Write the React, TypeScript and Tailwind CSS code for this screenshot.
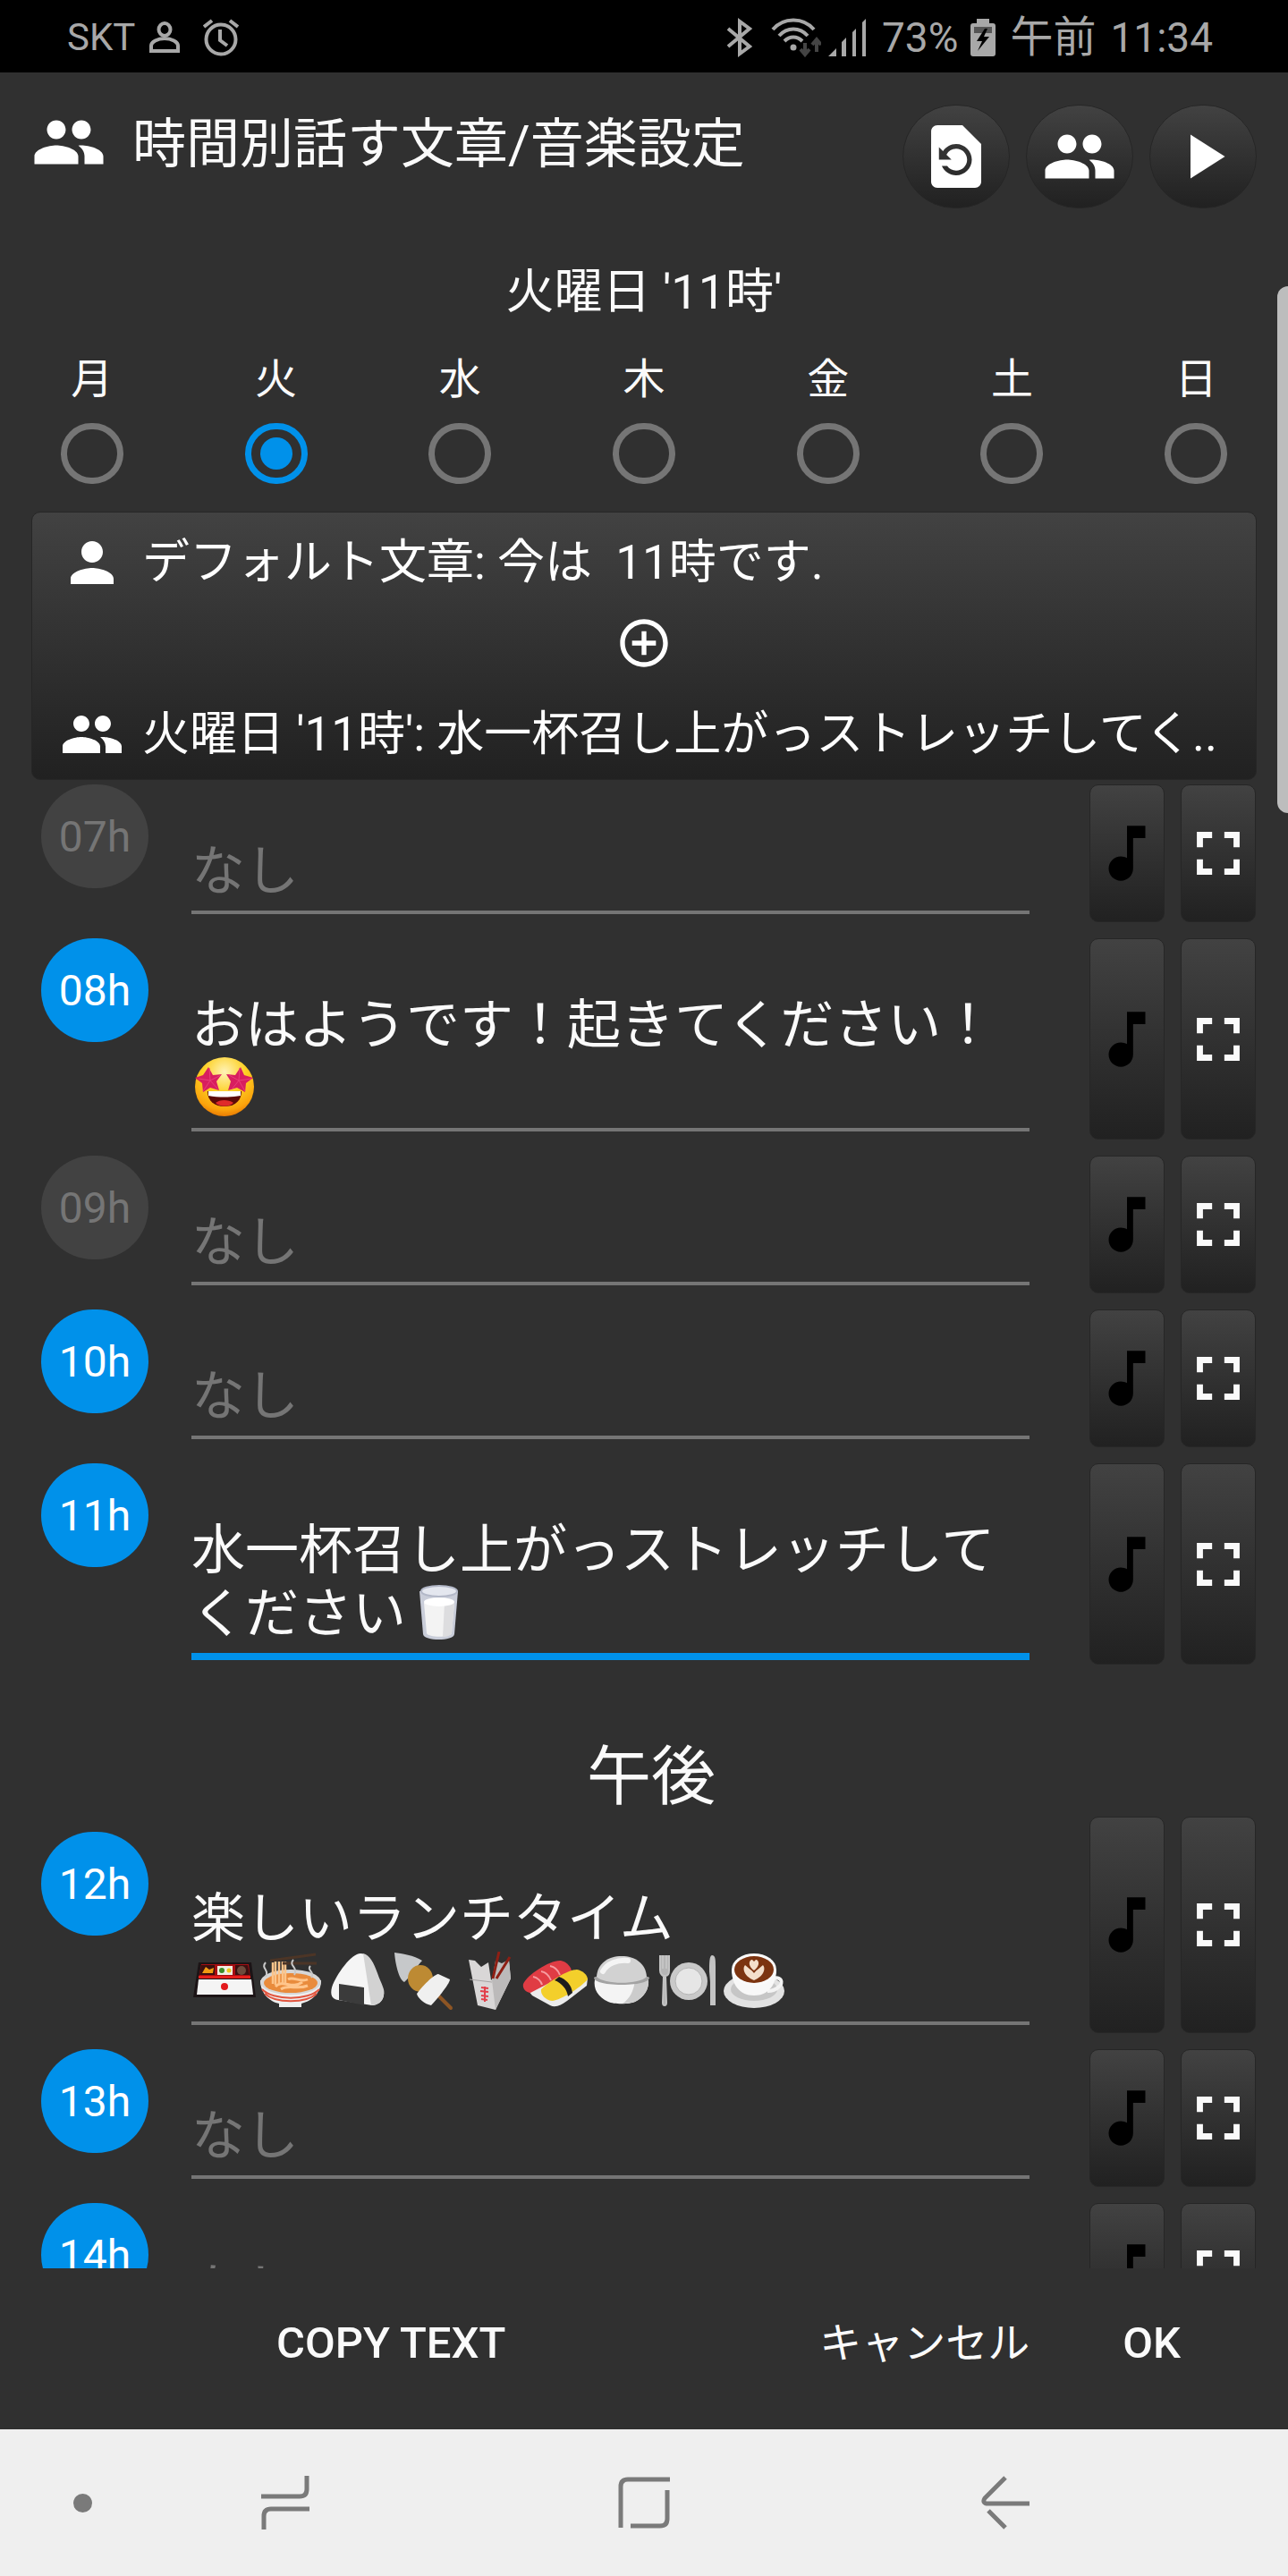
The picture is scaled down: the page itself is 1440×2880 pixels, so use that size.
import { useState } from "react";
import type { ReactNode } from "react";
import {
  MdAddCircleOutline,
  MdFullscreen,
  MdMusicNote,
  MdPeople,
  MdPerson,
  MdPlayArrow,
  MdRestorePage,
} from "react-icons/md";

const DAYS = ["月", "火", "水", "木", "金", "土", "日"];

const Emoji = ({ children }: { children: ReactNode }) => (
  <svg viewBox="0 0 74 72" className="h-[72px] w-[74px]" aria-hidden="true">
    {children}
  </svg>
);

const StarStruck = () => (
  <Emoji>
    <defs>
      <radialGradient id="face" cx="0.5" cy="0.25" r="0.8">
        <stop offset="0" stopColor="#fff3b8" />
        <stop offset="0.45" stopColor="#fdd023" />
        <stop offset="0.8" stopColor="#fba30c" />
        <stop offset="1" stopColor="#e06a00" />
      </radialGradient>
    </defs>
    <circle cx="37" cy="36" r="33" fill="url(#face)" />
    <path d="M19 14l5 9 10-1-6 8 3 10-10-3-8 5-1-10-8-6 9-3z" fill="#d81e5f" />
    <path d="M55 14l4 9 10 3-8 6-1 10-9-5-10 3 3-10-5-8 10 1z" fill="#d81e5f" />
    <path d="M20 15l1 14 12-6M21 29l8 9M21 29l-8 12M21 29L8 27" stroke="#e83f78" fill="none" />
    <path d="M54 15l-1 14-11-6M53 29l-8 10M53 29l7 12M53 29l14-2" stroke="#e83f78" fill="none" />
    <path d="M18 41h38c0 11-8 17-19 17S18 52 18 41z" fill="#5c0a08" />
    <path d="M19 41h36v5c-11 2-25 2-36 0z" fill="#fff" />
    <path d="M27 54c5-4 14-4 20 0-5 5-15 5-20 0z" fill="#e02a2a" />
  </Emoji>
);

const Milk = () => (
  <Emoji>
    <path d="M15 13l4 48c1 8 34 8 35 0l4-48z" fill="#c9cdd9" />
    <path d="M20 26l3 34c2 5 26 5 28 0l3-34z" fill="#f3f3f3" />
    <path d="M43 26h11l-3 34c-2 3-6 4-10 4z" fill="#dddddf" />
    <ellipse cx="37" cy="25" rx="17" ry="5" fill="#fff" />
    <ellipse cx="37" cy="13" rx="20" ry="6" fill="#e4e7ef" stroke="#b3b8c8" strokeWidth="2" />
  </Emoji>
);

const Bento = () => (
  <Emoji>
    <path d="M8 16h59l5 39H2z" fill="#1c1416" />
    <path d="M11 18h53l2 16H8z" fill="#a80e12" />
    <path d="M11 19h15v11H9zM49 19h14l2 11H49z" fill="#3a1010" />
    <path d="M29 20h17v10H29z" fill="#f1efe4" />
    <path d="M12 28l4-7 4 3 5-2-1 6z" fill="#f19a12" />
    <circle cx="34" cy="25" r="3" fill="#3c8c28" />
    <circle cx="42" cy="25" r="2.500" fill="#f0c81c" />
    <circle cx="56" cy="25" r="5" fill="#6d4b3c" />
    <path d="M8 31h58v3H8z" fill="#e6201c" />
    <path d="M8 35h59l2 17H6z" fill="#f4f4f4" />
    <circle cx="37" cy="43" r="4" fill="#e3191c" />
  </Emoji>
);

const Ramen = () => (
  <Emoji>
    <path d="M3 36c0 15 11 24 21 26v4h25v-4c12-3 22-12 22-26z" fill="#efefef" />
    <ellipse cx="37" cy="38" rx="34" ry="14" fill="#d6d6d6" />
    <ellipse cx="37" cy="39" rx="30" ry="11" fill="#e98b3c" />
    <path d="M17 16v24M20 15v26M24 15v26M28 15v26M31 15v24" stroke="#fcc48a" strokeWidth="2.500" />
    <path d="M20 43c8-9 18 4 30-5M26 46c9-6 18 1 30-4M34 35c6-4 13 4 22 0" stroke="#ffc58c" strokeWidth="3" fill="none" />
    <path d="M5 46c12 13 52 13 64 0M8 51c12 11 46 11 58 0" stroke="#e2553f" strokeWidth="2" fill="none" />
    <path d="M14 14l51-7M28 17h38" stroke="#4c3526" strokeWidth="3" />
    <path d="M9 16c-6 7 5 8 0 16M40 13c-6 7 6 8 1 17M59 20c-5 5 6 6 1 13" stroke="#c9c9c9" strokeWidth="2" fill="none" />
  </Emoji>
);

const Onigiri = () => (
  <Emoji>
    <path d="M41 6c7 0 13 7 18 22 4 12 9 18 8 25-1 7-7 11-13 11L16 58c-7-1-9-6-7-14C14 29 31 6 41 6z" fill="#f5f5f5" />
    <path d="M44 6c8 2 12 11 16 22 4 12 9 18 7 25-2 8-9 11-14 11z" fill="#d2d2d2" />
    <path d="M17 40l28 4v20l-28-6z" fill="#3b3b3b" />
  </Emoji>
);

const Oden = () => (
  <Emoji>
    <path d="M50 49l18 18" stroke="#8d5524" strokeWidth="4" strokeLinecap="round" />
    <path d="M5 5c8 1 22 3 31 9-6 6-13 18-20 24C10 35 6 18 5 5z" fill="#c6c8ca" />
    <ellipse cx="34" cy="34" rx="14" ry="15" fill="#bd8a33" />
    <path d="M54 29l13 6c0 5-17 25-21 29-7-1-15-8-16-13 6-8 18-21 24-22z" fill="#f0f0f0" />
  </Emoji>
);

const Takeout = () => (
  <Emoji>
    <path d="M14 13l7 1 7 7 8-5 3 20 20-22 2 20-17 35-20-5z" fill="#d9d7d7" />
    <path d="M40 36l4-22 7 3 8-4 2 21-17 35z" fill="#bcbaba" />
    <path d="M41 34l7-30M45 34l15-24" stroke="#8e1f14" strokeWidth="3" />
    <path d="M15 35l25 3" stroke="#a7a4a4" />
    <path d="M28 44l8 1M27 48l9 1M32 43v17M28 53l8 1M28 57l7 1" stroke="#e2404a" strokeWidth="2" />
  </Emoji>
);

const Sushi = () => (
  <Emoji>
    <path d="M2 42l9 11 20 11c6 3 12 0 19-5l22-17 1-8-25-9z" fill="#ececec" />
    <path d="M1 40c4-10 30-27 42-26 7 1 12 8 12 12L9 50c-6-1-9-5-8-10z" fill="#e03c44" />
    <path d="M12 32c5 1 9 5 10 9M21 26c6 1 9 5 11 10M31 20c6 1 9 5 11 10" stroke="#f69ba0" strokeWidth="2" fill="none" />
    <path d="M21 46c8-8 30-22 40-22 6 1 12 6 12 11-8 9-29 23-40 24-7-1-13-7-12-13z" fill="#f3cf2b" />
    <path d="M36 36l5-4c8 3 14 9 15 18l-5 4c-1-8-7-15-15-18z" fill="#1c1c1c" />
  </Emoji>
);

const Rice = () => (
  <Emoji>
    <path d="M7 35h60c1 11-5 20-15 25-6 3-24 3-30 0C11 55 5 46 7 35z" fill="#f4f4f4" />
    <path d="M52 35h15c1 11-5 20-15 25-4 1-9 2-14 2 8-5 13-15 14-27z" fill="#cccccc" />
    <path d="M6 33c2-4 60-4 62 0 0 4-10 8-31 8S6 37 6 33z" fill="#a3a3a3" />
    <path d="M9 32C10 17 22 9 37 9s27 8 28 23c-8 9-48 9-56 0z" fill="#d2d2d2" />
    <path d="M16 26c5-9 16-13 28-12" stroke="#f4f4f4" strokeWidth="6" strokeLinecap="round" fill="none" />
  </Emoji>
);

const Plate = () => (
  <Emoji>
    <path d="M6 8v17c0 4 3 6 4 6l-1 30c0 4 4 4 4 0l-1-30c2 0 4-2 4-6V8M9 8v15M13 8v15" stroke="#c4c4c4" strokeWidth="2" fill="#b5b5b5" />
    <circle cx="38" cy="37" r="21" fill="#c9c9c9" />
    <circle cx="38" cy="37" r="15" fill="#e6e6e6" stroke="#b5b5b5" />
    <path d="M64 8c4 0 4 5 4 12v44h-6V38l-1-12c0-8 0-18 3-18z" fill="#c4c4c4" />
  </Emoji>
);

const Coffee = () => (
  <Emoji>
    <ellipse cx="37" cy="48" rx="34" ry="19" fill="#e2e2e2" />
    <ellipse cx="37" cy="46" rx="26" ry="13" fill="#c6c6c6" />
    <path d="M57 34c11-3 13 5 8 9-3 3-8 5-13 5" stroke="#f3f3f3" strokeWidth="4" fill="none" />
    <path d="M12 24c0 16 8 29 25 29s25-13 25-29z" fill="#f8f8f8" />
    <ellipse cx="37" cy="24" rx="25" ry="18" fill="#fafafa" />
    <ellipse cx="37" cy="24" rx="22" ry="15" fill="#7c3410" />
    <path d="M37 36C25 31 24 22 27 19c3 3 7 5 10 9 3-4 7-6 10-9 3 3 2 12-10 17zM37 25c-8-6-5-12-2-12l2 2 2-2c3 0 6 6-2 12z" fill="#f3dfcb" />
  </Emoji>
);

type Hour = {
  hour: string;
  on: boolean;
  text: string;
  tall?: boolean;
  focused?: boolean;
  emoji?: ReactNode;
  emojiClass?: string;
};

const MORNING: Hour[] = [
  { hour: "07h", on: false, text: "" },
  {
    hour: "08h",
    on: true,
    text: "おはようです！起きてください！",
    tall: true,
    emoji: <StarStruck />,
    emojiClass: "left-0",
  },
  { hour: "09h", on: false, text: "" },
  { hour: "10h", on: true, text: "" },
  {
    hour: "11h",
    on: true,
    text: "水一杯召し上がっストレッチしてください",
    tall: true,
    focused: true,
    emoji: <Milk />,
    emojiClass: "left-60",
  },
];

const LUNCH: Hour = {
  hour: "12h",
  on: true,
  text: "楽しいランチタイム",
  tall: true,
  emoji: (
    <>
      <Bento />
      <Ramen />
      <Onigiri />
      <Oden />
      <Takeout />
      <Sushi />
      <Rice />
      <Plate />
      <Coffee />
    </>
  ),
  emojiClass: "left-0",
};

const AFTERNOON: Hour[] = [
  { hour: "13h", on: true, text: "" },
  { hour: "14h", on: true, text: "" },
];

const StatusBar = () => (
  <div className="flex h-[81px] shrink-0 items-center bg-black pl-[75px] pr-[84px] pt-[2px] text-[46px] leading-none text-[#a8a8a8]">
    <span className="text-[42px]">SKT</span>
    <svg viewBox="0 0 34 36" className="ml-4 h-9 w-[34px]" fill="none" stroke="currentColor" strokeWidth="4">
      <ellipse cx="17" cy="9" rx="6.500" ry="7" />
      <path d="M2 33v-6c0-4 7-8 15-8s15 4 15 8v6z" />
    </svg>
    <svg viewBox="0 0 40 42" className="ml-[26px] h-[42px] w-10" fill="none" stroke="currentColor" strokeWidth="4">
      <circle cx="20" cy="23" r="16.500" />
      <path d="M19 12v12l8 6M1 9l9-7M39 9l-9-7" />
    </svg>
    <svg viewBox="0 0 30 44" className="ml-auto h-11 w-[30px]" fill="none" stroke="currentColor" strokeWidth="4">
      <path d="M2 12l24 20-11 8V4l11 8L2 32" />
    </svg>
    <svg viewBox="0 0 56 44" className="ml-5 h-11 w-14" fill="none" stroke="currentColor" strokeWidth="4">
      <path d="M2 13c12-14 34-14 46 0M9 20c9-10 23-10 32 0M15 26c6-6 14-6 20 0" />
      <circle cx="25" cy="33" r="3.500" fill="currentColor" stroke="none" />
      <path d="M38 28v12M33 35l5 6 5-6M51 38V26M46 30l5-6 5 6" stroke="#444" />
    </svg>
    <svg viewBox="0 0 44 42" className="ml-2 h-[42px] w-11" fill="currentColor">
      <path d="M0 42l9-9v9zM15 42V26l5-5v21zM27 42V15l4-4v31zM38 42V4l4-4v42z" />
    </svg>
    <span className="ml-4">73%</span>
    <svg viewBox="0 0 28 42" className="ml-[14px] h-[42px] w-7" fill="currentColor">
      <path d="M7 0h14v5h4q3 0 3 3v31q0 3-3 3H3q-3 0-3-3V8q0-3 3-3h4z" />
      <path d="M4 9h20v7H4z" fill="#555" />
      <path d="M16 11L7 25h6l-5 11 13-16h-6l4-9z" fill="#000" />
    </svg>
    <span className="ml-4 text-[48px]">午前</span>
    <span className="ml-4">11:34</span>
  </div>
);

const RoundButton = ({ label, children }: { label: string; children: ReactNode }) => (
  <button
    type="button"
    aria-label={label}
    className="flex h-[116px] w-[120px] items-center justify-center rounded-full border border-[#262626] bg-linear-to-b from-[#424242] to-[#212121] text-[84px]"
  >
    {children}
  </button>
);

const SideButton = ({ label, children }: { label: string; children: ReactNode }) => (
  <button
    type="button"
    aria-label={label}
    className="flex w-[84px] items-center justify-center rounded-[10px] border border-[#262626] bg-linear-to-b from-[#424242] to-[#212121] text-[84px]"
  >
    {children}
  </button>
);

const HourRow = ({ item, spaced }: { item: Hour; spaced?: boolean }) => {
  const [text, setText] = useState(item.text);

  return (
    <div className="mb-[18px] flex pl-[46px] pr-9">
      <div className={spaced ? "flex flex-1 pt-[17px]" : "flex flex-1"}>
        <button
          type="button"
          className={`h-[116px] w-[120px] shrink-0 rounded-full pt-[2px] text-[48px] ${
            item.on ? "bg-[#0091ea] text-white" : "bg-[#424242] text-[#757575]"
          }`}
        >
          {item.hour}
        </button>
        <div
          className={`relative ml-12 flex-1 pt-[62px] pb-2 ${
            item.focused ? "mb-[5px] border-b-8 border-[#0091ea]" : "mb-[9px] border-b-4 border-[#757575]"
          }`}
        >
          <textarea
            aria-label={item.hour}
            placeholder="なし"
            value={text}
            onChange={(e) => setText(e.target.value)}
            className={`block w-full resize-none overflow-hidden bg-transparent text-[60px] leading-[71px] outline-none placeholder:text-[#757575] ${
              item.tall ? "h-[142px]" : "h-[71px]"
            }`}
          />
          {item.emoji && <div className={`absolute bottom-[10px] flex ${item.emojiClass}`}>{item.emoji}</div>}
        </div>
      </div>
      <div className="ml-[67px] flex gap-[18px]">
        <SideButton label={`${item.hour} music`}>
          <MdMusicNote className="text-black" />
        </SideButton>
        <SideButton label={`${item.hour} fullscreen`}>
          <MdFullscreen />
        </SideButton>
      </div>
    </div>
  );
};

const NavBar = () => (
  <nav className="grid h-[164px] shrink-0 grid-cols-[184px_270fr_532fr_276fr_178px] place-items-center bg-[#efefef] text-[#7a7a7a]">
    <button type="button" aria-label="Dot" className="size-[21px] rounded-full bg-[#7a7a7a]" />
    <button type="button" aria-label="Recents">
      <svg viewBox="0 0 54 60" className="h-[60px] w-[54px]" fill="none" stroke="currentColor" strokeWidth="5">
        <path d="M0 23h43q8 0 8-8V0M54 37H11q-8 0-8 8v15" />
      </svg>
    </button>
    <button type="button" aria-label="Home">
      <svg viewBox="0 0 58 58" className="size-[58px]" fill="none" stroke="currentColor" strokeWidth="5">
        <path d="M3 57V11q0-8 8-8h47M55 15v32q0 8-8 8H14" />
      </svg>
    </button>
    <button type="button" aria-label="Back">
      <svg viewBox="0 0 54 60" className="h-[60px] w-[54px]" fill="none" stroke="currentColor" strokeWidth="5">
        <path d="M54 31H6q-5-1-2-6L27 2M8 39l19 19" />
      </svg>
    </button>
  </nav>
);

const App = () => {
  const [day, setDay] = useState("火");

  return (
    <div className="relative flex h-screen flex-col overflow-hidden bg-[#303030] font-['Roboto','Noto_Sans_CJK_JP',sans-serif] text-[#fafafa]">
      <StatusBar />

      <header className="flex items-start px-[35px] pt-9 text-white">
        <MdPeople className="shrink-0 text-[84px]" />
        <h1 className="ml-[29px] text-[60px] leading-[90px] text-[#fafafa]">時間別話す文章/音楽設定</h1>
        <div className="ml-auto flex gap-[18px]">
          <RoundButton label="Restore">
            <MdRestorePage />
          </RoundButton>
          <RoundButton label="Sentences">
            <MdPeople />
          </RoundButton>
          <RoundButton label="Play">
            <MdPlayArrow />
          </RoundButton>
        </div>
      </header>

      <h2 className="mt-[58px] text-center text-[54px] leading-[72px]">火曜日 '11時'</h2>

      <div className="mt-6 grid grid-cols-7">
        {DAYS.map((d) => (
          <label key={d} className="flex flex-col items-center text-[47px] leading-[74px]">
            {d}
            <input
              type="radio"
              name="day"
              checked={day === d}
              onChange={() => setDay(d)}
              className="mt-3 flex h-[68px] w-[70px] appearance-none items-center justify-center rounded-full border-[7px] border-[#757575] checked:border-[#0091ea] checked:before:size-9 checked:before:rounded-full checked:before:bg-[#0091ea]"
            />
          </label>
        ))}
      </div>

      <section className="mx-[35px] mt-[31px] flex h-[300px] shrink-0 flex-col rounded-[10px] border border-[#262626] bg-linear-to-b from-[#424242] to-[#212121] px-[31px] pt-5 text-[53px] leading-[72px] text-white">
        <div className="flex items-center">
          <MdPerson className="shrink-0 text-[72px]" />
          <p className="ml-5 whitespace-pre">デフォルト文章: 今は  11時です.</p>
        </div>
        <MdAddCircleOutline className="mt-[22px] self-center text-[64px]" />
        <div className="mt-[34px] flex items-center">
          <MdPeople className="shrink-0 text-[72px]" />
          <p className="ml-5 whitespace-nowrap">火曜日 '11時': 水一杯召し上がっストレッチしてく..</p>
        </div>
      </section>

      <main className="min-h-0 flex-1 overflow-hidden pt-[5px]">
        {MORNING.map((item) => (
          <HourRow key={item.hour} item={item} />
        ))}
        <h2 className="pl-4 pt-16 text-center text-[72px] leading-[88px]">午後</h2>
        <HourRow item={LUNCH} spaced />
        {AFTERNOON.map((item) => (
          <HourRow key={item.hour} item={item} />
        ))}
      </main>

      <footer className="flex h-[180px] shrink-0 items-center pb-3 pl-[309px] pr-[120px] text-[49px] font-medium">
        <button type="button">COPY TEXT</button>
        <button type="button" className="ml-auto text-[47px] font-normal">
          キャンセル
        </button>
        <button type="button" className="ml-[104px]">
          OK
        </button>
      </footer>

      <NavBar />

      <div className="absolute right-0 top-80 h-[589px] w-3 rounded-l-xl bg-[#bdbdbd]" />
    </div>
  );
};

export default App;
